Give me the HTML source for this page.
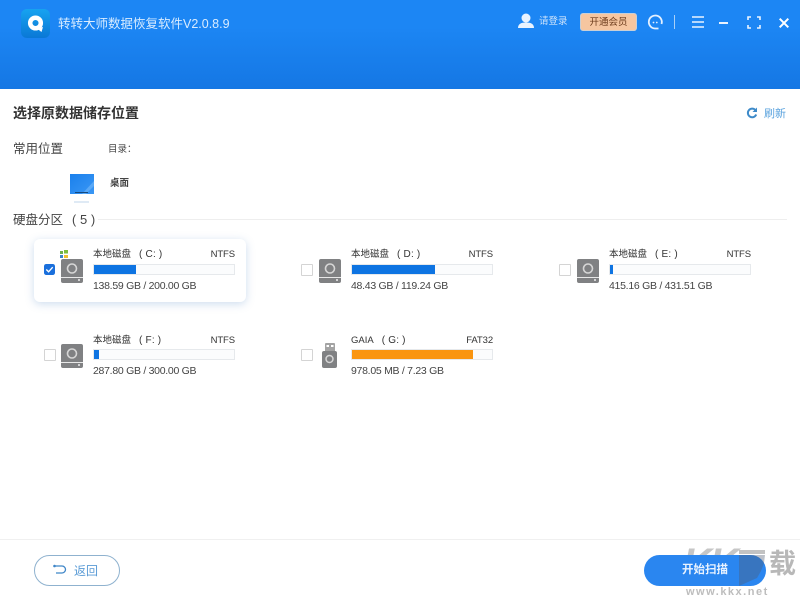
<!DOCTYPE html>
<html><head><meta charset="utf-8"><style>
html,body{margin:0;padding:0;width:800px;height:599px;overflow:hidden;background:#fff;font-family:"Liberation Sans","Noto Sans CJK SC",sans-serif;color:#333}
.a{position:absolute;white-space:nowrap}
#hd{position:absolute;left:0;top:0;width:800px;height:89px;background:linear-gradient(#1c86f4,#1c86f4 30%,#1577e4)}
.bar{position:absolute;height:11px;width:142px;background:#fbfcfd;border:1px solid #e6e9ec;box-sizing:border-box}
.bar i{position:absolute;left:0;top:0;height:9px;background:#0e74e2}
.cb{position:absolute;width:10px;height:10px;border:1px solid #d4d4d4;background:#fff;border-radius:1px}
.t{font-size:9.5px;color:#333;line-height:12px}
.n{font-size:9.5px;color:#333;line-height:12px;letter-spacing:-.1px;text-align:right;width:40px}
.s{font-size:10.5px;color:#444;line-height:12px;letter-spacing:-.28px}
.p{display:inline-block;margin-left:8px;font-size:10px;letter-spacing:.2px}
</style></head><body>
<div id="hd"></div>
<svg class="a" style="left:21px;top:9px" width="29" height="29" viewBox="0 0 29 29"><defs><linearGradient id="g" x1="0" y1="0" x2="0" y2="1"><stop offset="0" stop-color="#17a3f0"/><stop offset="1" stop-color="#0a78d6"/></linearGradient></defs><rect width="29" height="29" rx="6" fill="url(#g)"/><circle cx="14.500" cy="14" r="5.300" fill="none" stroke="#fff" stroke-width="4.500"/><path d="M16 19.500l6 -1.500-1.500 5z" fill="#fff"/></svg>
<div class="a" style="left:58px;top:16px;font-size:12.500px;line-height:16px;color:#d9ecff">转转大师数据恢复软件V2.0.8.9</div>
<svg class="a" style="left:517px;top:13px" width="18" height="16" viewBox="0 0 18 16"><circle cx="9" cy="5" r="4.500" fill="#e9f3ff"/><path d="M1 15c0-4 3-5.500 8-5.500s8 1.500 8 5.500z" fill="#e9f3ff"/></svg>
<div class="a" style="left:539px;top:16px;font-size:9.500px;line-height:12px;color:#cfe4fb">请登录</div>
<div class="a" style="left:580px;top:13px;width:57px;height:18px;background:#f6c6a0;border:1px solid #c9cfd6;box-sizing:border-box;border-radius:3px;text-align:center;font-size:9.500px;line-height:18px;color:#6b3a1a">开通会员</div>
<svg class="a" style="left:647px;top:13px" width="17" height="18" viewBox="0 0 17 18" fill="none" stroke="#e3f0ff" stroke-width="1.800"><path d="M14.500 11A6.500 6.500 0 1 0 8 15.500h3.500"/><circle cx="6.500" cy="9.500" r=".9" fill="#e3f0ff" stroke="none"/><circle cx="9.800" cy="9.500" r=".9" fill="#e3f0ff" stroke="none"/></svg>
<div class="a" style="left:674px;top:15px;width:1px;height:14px;background:#a9d0f7"></div>
<svg class="a" style="left:691px;top:15px" width="14" height="14" viewBox="0 0 14 14" stroke="#e9f3ff" stroke-width="1.500"><path d="M1 2h12M1 7h12M1 12h12"/></svg>
<div class="a" style="left:719px;top:22px;width:9px;height:1.500px;background:#e9f3ff"></div>
<svg class="a" style="left:747px;top:16px" width="14" height="13" viewBox="0 0 14 13" fill="none" stroke="#e9f3ff" stroke-width="1.600"><path d="M1 4V1h3M10 1h3v3M13 9v3h-3M4 12H1V9"/></svg>
<svg class="a" style="left:779px;top:18px" width="10" height="10" viewBox="0 0 10 10" stroke="#fff" stroke-width="2"><path d="M.7 .7l8.600 8.600M9.300 .7l-8.600 8.600"/></svg>

<div class="a" style="left:13px;top:104px;font-size:14px;line-height:18px;font-weight:bold;color:#333">选择原数据储存位置</div>
<svg class="a" style="left:746px;top:107px" width="12" height="12" viewBox="0 0 12 12" fill="none" stroke="#3d8ac9" stroke-width="2"><path d="M9.500 3.200A4.300 4.300 0 1 0 10.200 7.500"/><path d="M11 .5v4.500h-4.500" fill="#3d8ac9" stroke="none"/></svg>
<div class="a" style="left:764px;top:108px;font-size:11px;line-height:13px;color:#5ba3de">刷新</div>
<div class="a" style="left:13px;top:141px;font-size:12.500px;line-height:16px;color:#444">常用位置</div>
<div class="a" style="left:108px;top:142px;font-size:9.500px;line-height:13px;color:#444;font-family:'Noto Sans CJK SC',sans-serif">目录：</div>
<svg class="a" style="left:70px;top:174px" width="24" height="31" viewBox="0 0 24 31"><defs><linearGradient id="m" x1="0" y1="0" x2="1" y2="1"><stop offset="0" stop-color="#1a80ec"/><stop offset="1" stop-color="#3a97f5"/></linearGradient></defs><rect width="24" height="20" fill="url(#m)"/><path d="M12 20L24 7v5l-8 8z" fill="#5aa9f7"/><rect x="5" y="18" width="13" height="1" fill="#15497f"/><rect x="4" y="27" width="15" height="2" fill="#dfeaf5"/></svg>
<div class="a" style="left:110px;top:178px;font-size:9.500px;line-height:12px;color:#444;font-weight:bold">桌面</div>
<div class="a" style="left:13px;top:212px;font-size:12.500px;line-height:16px;color:#444">硬盘分区<span style="position:absolute;left:59px;top:0">(</span><span style="position:absolute;left:67px;top:0;font-size:13px">5</span><span style="position:absolute;left:78px;top:0">)</span></div>
<div class="a" style="left:98px;top:219px;width:689px;height:1px;background:#eeeeee"></div>

<div class="a" style="left:34px;top:239px;width:212px;height:63px;background:#fff;border-radius:6px;box-shadow:0 2px 9px rgba(90,140,200,.3)"></div>

<!-- C -->
<svg class="a" style="left:44px;top:264px" width="11" height="11" viewBox="0 0 12 12"><rect width="12" height="12" rx="2.500" fill="#1a6fdc"/><path d="M2.500 6l2.500 2.500 4.500-5" fill="none" stroke="#fff" stroke-width="1.500"/></svg>
<svg class="a" style="left:60px;top:250px" width="24" height="34" viewBox="0 0 24 34"><rect x="0" y="1" width="3" height="3" fill="#6fb04a"/><rect x="4" y="0" width="4" height="3.500" fill="#7fbe3c"/><rect x="0" y="5" width="3" height="3" fill="#3f84c8"/><rect x="4" y="5" width="4" height="3" fill="#f0c030"/><rect x="1" y="9" width="22" height="24" rx="2" fill="#808183"/><circle cx="12" cy="18.500" r="4.500" fill="none" stroke="#d6d6d6" stroke-width="1.600"/><rect x="1" y="27" width="22" height="1" fill="#e8e8e8"/><circle cx="19" cy="30" r="1" fill="#eee"/></svg>
<div class="a t" style="left:93px;top:249px">本地磁盘<span class="p">( C: )</span></div>
<div class="a n" style="left:195px;top:249px">NTFS</div>
<div class="bar" style="left:93px;top:264px"><i style="width:42px"></i></div>
<div class="a s" style="left:93px;top:280px">138.59 GB / 200.00 GB</div>

<!-- D -->
<div class="cb" style="left:301px;top:264px"></div>
<svg class="a" style="left:318px;top:259px" width="24" height="24" viewBox="0 0 24 24"><rect x="1" y="0" width="22" height="24" rx="2" fill="#808183"/><circle cx="12" cy="9.500" r="4.500" fill="none" stroke="#d6d6d6" stroke-width="1.600"/><rect x="1" y="18" width="22" height="1" fill="#e8e8e8"/><circle cx="19" cy="21" r="1" fill="#eee"/></svg>
<div class="a t" style="left:351px;top:249px">本地磁盘<span class="p">( D: )</span></div>
<div class="a n" style="left:453px;top:249px">NTFS</div>
<div class="bar" style="left:351px;top:264px"><i style="width:83px"></i></div>
<div class="a s" style="left:351px;top:280px">48.43 GB / 119.24 GB</div>

<!-- E -->
<div class="cb" style="left:559px;top:264px"></div>
<svg class="a" style="left:576px;top:259px" width="24" height="24" viewBox="0 0 24 24"><rect x="1" y="0" width="22" height="24" rx="2" fill="#808183"/><circle cx="12" cy="9.500" r="4.500" fill="none" stroke="#d6d6d6" stroke-width="1.600"/><rect x="1" y="18" width="22" height="1" fill="#e8e8e8"/><circle cx="19" cy="21" r="1" fill="#eee"/></svg>
<div class="a t" style="left:609px;top:249px">本地磁盘<span class="p">( E: )</span></div>
<div class="a n" style="left:711px;top:249px">NTFS</div>
<div class="bar" style="left:609px;top:264px"><i style="width:3px"></i></div>
<div class="a s" style="left:609px;top:280px">415.16 GB / 431.51 GB</div>

<!-- F -->
<div class="cb" style="left:44px;top:349px"></div>
<svg class="a" style="left:60px;top:344px" width="24" height="24" viewBox="0 0 24 24"><rect x="1" y="0" width="22" height="24" rx="2" fill="#808183"/><circle cx="12" cy="9.500" r="4.500" fill="none" stroke="#d6d6d6" stroke-width="1.600"/><rect x="1" y="18" width="22" height="1" fill="#e8e8e8"/><circle cx="19" cy="21" r="1" fill="#eee"/></svg>
<div class="a t" style="left:93px;top:335px">本地磁盘<span class="p">( F: )</span></div>
<div class="a n" style="left:195px;top:335px">NTFS</div>
<div class="bar" style="left:93px;top:349px"><i style="width:5px"></i></div>
<div class="a s" style="left:93px;top:365px">287.80 GB / 300.00 GB</div>

<!-- G -->
<div class="cb" style="left:301px;top:349px"></div>
<svg class="a" style="left:321px;top:342px" width="18" height="27" viewBox="0 0 18 27"><rect x="4" y="1" width="10" height="9" rx="1" fill="#a3a3a3"/><rect x="5.500" y="3" width="2.500" height="2" fill="#fff"/><rect x="10" y="3" width="2.500" height="2" fill="#fff"/><rect x="1" y="9" width="15" height="17" rx="2" fill="#808183"/><circle cx="8.500" cy="17" r="3.500" fill="none" stroke="#d6d6d6" stroke-width="1.500"/></svg>
<div class="a t" style="left:351px;top:335px">GAIA<span class="p" style="margin-left:8px">( G: )</span></div>
<div class="a n" style="left:453px;top:335px">FAT32</div>
<div class="bar" style="left:351px;top:349px"><i style="width:121px;background:#fa9510"></i></div>
<div class="a s" style="left:351px;top:365px">978.05 MB / 7.23 GB</div>

<div class="a" style="left:0;top:539px;width:800px;height:1px;background:#f0f0f0"></div>
<div class="a" style="left:34px;top:555px;width:86px;height:31px;border:1px solid #8fb2cf;box-sizing:border-box;border-radius:16px;background:#fff"></div>
<svg class="a" style="left:52px;top:563px" width="16" height="13" viewBox="0 0 16 13" fill="none" stroke="#3f86c8" stroke-width="1.300"><path d="M2 3h8a3.500 3.500 0 0 1 0 7H4"/><circle cx="2.500" cy="3" r="1.300" fill="#3f86c8" stroke="none"/></svg>
<div class="a" style="left:74px;top:564px;font-size:12px;line-height:14px;color:#5a9bd6">返回</div>

<div class="a" style="left:683px;top:540px;font-size:40px;line-height:46px;color:#c6c6c6;font-weight:bold;font-style:italic;letter-spacing:-2px">KK</div>
<div class="a" style="left:644px;top:555px;width:122px;height:31px;background:#2a86f0;border-radius:16px;text-align:center;font-size:11.500px;line-height:31px;color:#e9f3ff;font-weight:bold"></div>
<svg class="a" style="left:735px;top:548px" width="32" height="38" viewBox="0 0 32 38"><path d="M4 2h26v4H4z" fill="#c2c2c2"/><path d="M4 7H30l-1 8-3 8-4 7-18 8z" fill="rgba(80,90,110,.38)"/></svg>
<div class="a" style="left:644px;top:555px;width:122px;height:31px;text-align:center;font-size:11.500px;line-height:31px;color:#e9f3ff;font-weight:bold">开始扫描</div>
<div class="a" style="left:769px;top:548px;font-size:27px;line-height:32px;color:#b8b8b8;font-weight:bold">载</div>
<div class="a" style="left:686px;top:586px;font-size:11px;line-height:12px;color:#bdbdbd;font-weight:bold;letter-spacing:1.500px">www.kkx.net</div>
</body></html>
